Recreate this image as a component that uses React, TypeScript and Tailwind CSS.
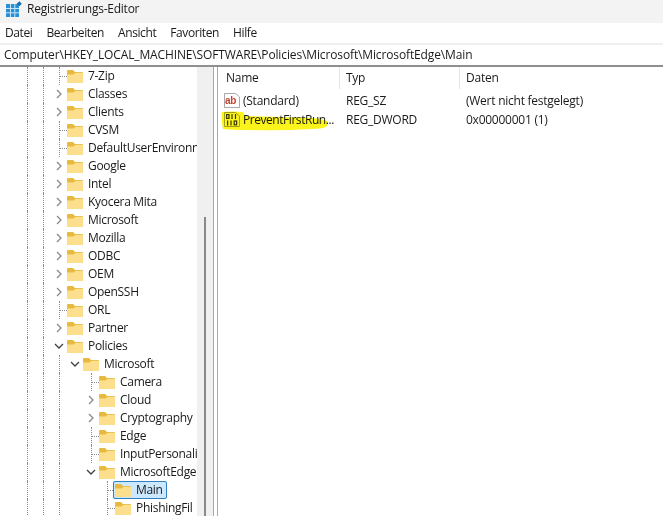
type TreeItem = {
  label: string;
  guides: number[]; // columns that carry a vertical dotted line
  depth: number;
  toggle?: 'open' | 'closed';
  selected?: boolean;
};

const treeItems: TreeItem[] = [
  { label: '7-Zip', guides: [0, 1], depth: 2 },
  { label: 'Classes', guides: [0, 1], depth: 2, toggle: 'closed' },
  { label: 'Clients', guides: [0, 1], depth: 2, toggle: 'closed' },
  { label: 'CVSM', guides: [0, 1], depth: 2 },
  { label: 'DefaultUserEnvironn', guides: [0, 1], depth: 2 },
  { label: 'Google', guides: [0, 1], depth: 2, toggle: 'closed' },
  { label: 'Intel', guides: [0, 1], depth: 2, toggle: 'closed' },
  { label: 'Kyocera Mita', guides: [0, 1], depth: 2, toggle: 'closed' },
  { label: 'Microsoft', guides: [0, 1], depth: 2, toggle: 'closed' },
  { label: 'Mozilla', guides: [0, 1], depth: 2, toggle: 'closed' },
  { label: 'ODBC', guides: [0, 1], depth: 2, toggle: 'closed' },
  { label: 'OEM', guides: [0, 1], depth: 2, toggle: 'closed' },
  { label: 'OpenSSH', guides: [0, 1], depth: 2, toggle: 'closed' },
  { label: 'ORL', guides: [0, 1], depth: 2 },
  { label: 'Partner', guides: [0, 1], depth: 2, toggle: 'closed' },
  { label: 'Policies', guides: [0, 1], depth: 2, toggle: 'open' },
  { label: 'Microsoft', guides: [0, 1, 2], depth: 3, toggle: 'open' },
  { label: 'Camera', guides: [0, 1, 2], depth: 4 },
  { label: 'Cloud', guides: [0, 1, 2], depth: 4, toggle: 'closed' },
  { label: 'Cryptography', guides: [0, 1, 2], depth: 4, toggle: 'closed' },
  { label: 'Edge', guides: [0, 1, 2], depth: 4 },
  { label: 'InputPersonali', guides: [0, 1, 2], depth: 4 },
  { label: 'MicrosoftEdge', guides: [0, 1, 2], depth: 4, toggle: 'open' },
  { label: 'Main', guides: [0, 1, 2], depth: 5, selected: true },
  { label: 'PhishingFil', guides: [0, 1, 2], depth: 5 },
];

function FolderIcon() {
  return (
    <svg width="16" height="13" viewBox="0 0 16 13" className="shrink-0">
      <path d="M0 1 Q0 0 1 0 H6 L8 2 H15 Q16 2 16 3 V12 Q16 13 15 13 H1 Q0 13 0 12 Z" fill="#e9b93f" />
      <path d="M0 4.5 H6.5 L8.5 2.8 H15 Q16 2.8 16 3.8 V12 Q16 13 15 13 H1 Q0 13 0 12 Z" fill="#fbdf8d" />
    </svg>
  );
}

function Chevron({ open }: { open: boolean }) {
  return (
    <svg width="10" height="10" viewBox="0 0 10 10" fill="none" stroke={open ? '#404040' : '#8a8a8a'} strokeWidth="1.3">
      {open ? <path d="M1 3 L5 7 L9 3" /> : <path d="M3 1 L7 5 L3 9" />}
    </svg>
  );
}

function TreeRow({ item }: { item: TreeItem }) {
  return (
    <div className="flex h-[18px] items-center pl-[19px]">
      {Array.from({ length: item.depth }, (_, col) => (
        <div key={col} className="relative h-[18px] w-4 shrink-0">
          {item.guides.includes(col) && (
            <span className="absolute top-0 left-2 h-full border-l border-dotted border-[#8c8c8c]" />
          )}
        </div>
      ))}
      <div className="relative flex h-[18px] w-4 shrink-0 items-center justify-center">
        {item.toggle ? (
          <Chevron open={item.toggle === 'open'} />
        ) : (
          <>
            <span className="absolute top-0 left-2 h-full border-l border-dotted border-[#8c8c8c]" />
            <span className="absolute top-[9px] left-2 w-2 border-t border-dotted border-[#8c8c8c]" />
          </>
        )}
      </div>
      {item.selected ? (
        <div className="relative z-10 -ml-[2px] flex h-[18px] w-[54px] items-center gap-[5px] rounded-[2px] border border-[#2f7fc1] bg-[#cce8ff] pl-[1px]">
          <FolderIcon />
          <span className="leading-[16px] whitespace-nowrap">{item.label}</span>
        </div>
      ) : (
        <>
          <FolderIcon />
          <span className="ml-[5px] leading-[18px] whitespace-nowrap">{item.label}</span>
        </>
      )}
    </div>
  );
}

function StringValueIcon() {
  return (
    <svg width="16" height="15" viewBox="0 0 16 15" className="shrink-0">
      <path d="M0.5 0.5 H11.5 L15.5 4 V14.5 H0.5 Z" fill="#fff" stroke="#a8a8a8" />
      <text x="1" y="11" fontSize="10" fontWeight="700" fill="#c2452d" fontFamily="Liberation Sans, sans-serif">ab</text>
    </svg>
  );
}

function BinaryValueIcon() {
  return (
    <svg width="16" height="15" viewBox="0 0 16 15" className="shrink-0">
      <path d="M0.5 0.5 H11.5 L15.5 4 V14.5 H0.5 Z" fill="#fff" stroke="#a8a8a8" />
      <g fill="none" stroke="#3b3b1a" strokeWidth="1.2">
        <rect x="2.6" y="2.6" width="2.4" height="3.8" />
        <path d="M8 2 V7" />
        <path d="M11.5 2 V7" />
        <path d="M3.6 8.5 V13.5" />
        <path d="M7 8.5 V13.5" />
        <rect x="10.2" y="9" width="2.4" height="3.8" />
      </g>
    </svg>
  );
}

function AppIcon() {
  return (
    <svg width="17" height="16" viewBox="0 0 17 16" className="shrink-0">
      <rect x="0" y="3" width="13" height="13" fill="#2b8fd6" />
      <path d="M4.5 3 V16 M8.8 3 V16 M0 7.5 H13 M0 11.8 H13" stroke="#c5e6f8" strokeWidth="1" />
      <rect x="11.5" y="1" width="3.6" height="3.6" transform="rotate(45 13.3 2.8)" fill="#1b6fb0" />
    </svg>
  );
}

export default function App() {
  return (
    <div className="flex h-[516px] w-[663px] flex-col overflow-hidden bg-white font-['Open_Sans','Noto_Sans',sans-serif] text-[12px] text-[#1a1a1a]">
      {/* Title */}
      <div className="flex h-[23px] items-center gap-[4px] bg-[#f3f3f3] pb-[5px] pl-[6px] tracking-[-0.25px]">
        <AppIcon />
        <span>Registrierungs-Editor</span>
      </div>
      {/* Menu */}
      <div className="flex h-[20px] items-center gap-[14px] bg-white pl-[5px] tracking-[-0.4px]">
        <span>Datei</span>
        <span>Bearbeiten</span>
        <span>Ansicht</span>
        <span>Favoriten</span>
        <span>Hilfe</span>
      </div>
      <div className="h-[2px] bg-[#f0f0f0]" />
      {/* Key path */}
      <div className="flex h-[20px] items-center bg-white pl-[4px] tracking-[-0.13px] whitespace-nowrap">
        Computer\HKEY_LOCAL_MACHINE\SOFTWARE\Policies\Microsoft\MicrosoftEdge\Main
      </div>

      <div className="flex min-h-0 flex-1 border-t-2 border-[#8f8f8f]">
        {/* Key tree */}
        <div className="flex w-[197px] shrink-0 flex-col overflow-hidden tracking-[-0.3px]">
          {treeItems.map((item, i) => (
            <TreeRow key={i} item={item} />
          ))}
        </div>
        {/* Tree scrollbar */}
        <div className="flex w-[16px] shrink-0 justify-center bg-[#f0f0f0] pt-[150px]">
          <div className="h-full w-[2px] bg-[#8a8a8a]" />
        </div>
        {/* Splitter */}
        <div className="w-[5px] shrink-0 border-x border-[#a8a8a8] bg-white" />

        {/* Values */}
        <div className="relative min-w-0 flex-1 tracking-[-0.25px]">
          <div className="flex h-[22px] items-center">
            <span className="h-full w-[122px] border-r border-[#e5e5e5] pl-[8px] leading-[22px]">Name</span>
            <span className="h-full w-[120px] border-r border-[#e5e5e5] pl-[6px] leading-[22px]">Typ</span>
            <span className="pl-[6px]">Daten</span>
          </div>
          <div className="mt-[2px] flex h-[19px] items-center">
            <div className="flex w-[122px] items-center gap-[3px] pl-[6px]">
              <StringValueIcon />
              <span>(Standard)</span>
            </div>
            <span className="w-[120px] pl-[6px]">REG_SZ</span>
            <span className="pl-[6px]">(Wert nicht festgelegt)</span>
          </div>
          <div className="flex h-[19px] items-center">
            <div className="flex w-[122px] items-center gap-[3px] pl-[6px]">
              <BinaryValueIcon />
              <span className="tracking-[-0.45px]">PreventFirstRun...</span>
            </div>
            <span className="w-[120px] pl-[6px]">REG_DWORD</span>
            <span className="pl-[6px]">0x00000001 (1)</span>
          </div>
          {/* Marker stroke over the second value */}
          <svg width="110" height="24" viewBox="0 0 110 24" className="absolute top-[43px] left-[2px] mix-blend-multiply">
            <path
              d="M2 2 Q12 1 23 2 L25 6 Q60 7 90 8 Q104 9 107 11 V16 Q104 19 92 19 Q60 21 30 20 Q12 20 3 19 Q1 10 2 2 Z"
              fill="#fbf31c"
            />
          </svg>
        </div>
      </div>
    </div>
  );
}
